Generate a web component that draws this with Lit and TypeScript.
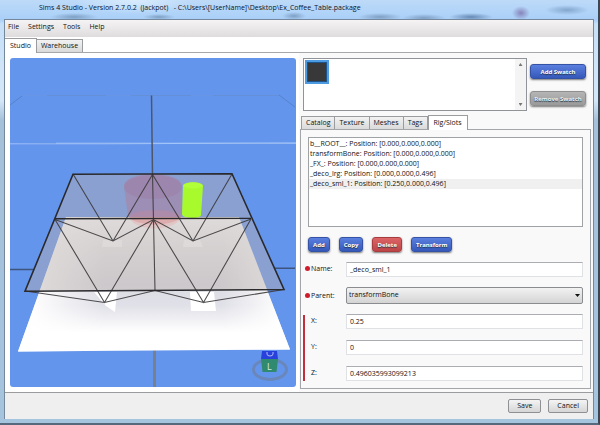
import { LitElement, html, css, svg } from "lit";
import { customElement, state } from "lit/decorators.js";

const BONES = [
  "b__ROOT__: Position: [0.000,0.000,0.000]",
  "transformBone: Position: [0.000,0.000,0.000]",
  "_FX_: Position: [0.000,0.000,0.000]",
  "_deco_lrg: Position: [0.000,0.000,0.496]",
  "_deco_sml_1: Position: [0.250,0.000,0.496]",
];

@customElement("model-viewport")
class ModelViewport extends LitElement {
  static styles = css`
    :host {
      display: block;
      min-height: 320px;
      margin-bottom: 2px;
      border-radius: 3px;
      overflow: hidden;
      background: #6495ed;
      position: relative;
    }
    .scene {
      position: absolute;
      inset: 0;
      width: 100%;
      height: 100%;
      display: block;
    }
    .frame {
      fill: none;
      stroke: #3c3a3c;
      stroke-opacity: 0.9;
      stroke-width: 1.1;
    }
    .edge {
      fill: none;
      stroke: #2a2a2c;
      stroke-width: 1.6;
    }
    .letter {
      font: 9px "Open Sans", sans-serif;
      fill: #d5efe2;
    }
  `;

  render() {
    return html`<svg class="scene" viewBox="10 58 286 329" preserveAspectRatio="xMidYMid slice" role="img" aria-label="Model preview">
      ${svg`
      <defs>
        <linearGradient id="floor" x1="0" y1="217" x2="0" y2="351" gradientUnits="userSpaceOnUse">
          <stop offset="0" stop-color="#fdfdfd"/>
          <stop offset=".22" stop-color="#ececee"/>
          <stop offset=".5" stop-color="#dcdce3"/>
          <stop offset=".66" stop-color="#e0e0e8"/>
          <stop offset=".86" stop-color="#fff"/>
        </linearGradient>
        <linearGradient id="fade" x1="0" y1="0" x2="1" y2="0">
          <stop offset=".06" stop-color="#fff" stop-opacity=".95"/>
          <stop offset=".32" stop-color="#fff" stop-opacity="0"/>
          <stop offset=".75" stop-color="#fff" stop-opacity="0"/>
          <stop offset=".95" stop-color="#fff" stop-opacity=".9"/>
        </linearGradient>
      </defs>
      <path d="M10 105 22 96M279 95l16 12" stroke="#5583c9" fill="none"/>
      <path d="M47 95.500H106M131 95.500h60M213 95.500h66" stroke="#5c86cb"/>
      <path d="M22 95.500H279" stroke="#6c95dd" stroke-width=".6"/>
      <path d="M10 143.800H102L296 143" stroke="#9dc0f8"/>
      <path d="M56 143.200H296" stroke="#a8c9fa" stroke-width=".8"/>
      <path d="M151.500 95.500 152.500 175" stroke="#4c566b" stroke-width="1.5"/>
      <path d="M10 269.500H34M274 268.200H295" stroke="#3d547e" stroke-width="1.4"/>
      <path d="M154.500 345V387" stroke="#76808f" stroke-width="3"/>
      <path d="M66 217H239L290 349.500 18 351.500Z" fill="url(#floor)"/>
      <path d="M66 217H239L290 349.500 18 351.500Z" fill="url(#fade)"/>
      <path d="M103 240h19v7h-20zM184 240h16l3 7h-20z" fill="#fff" opacity=".75"/>
      <path d="M94 292h23l-2 20-9-6zM190 292h24l2 19h-25z" fill="#fff"/>
      <path d="M73 174H232L284 289.500 25 291.500Z" fill="#b8b0ae" fill-opacity=".44"/>
      <path d="M124 186a29 12 0 0 1 58 0V216a28 12 0 0 1-54 0z" fill="#d0606c" fill-opacity=".28"/>
      <ellipse cx="153" cy="187" rx="29" ry="12" fill="#9a6a92" fill-opacity=".2"/>
      <path d="M129 216a25 12 0 0 0 52 0c-6-7-44-8-52 0z" fill="#f08084" fill-opacity=".2"/>
      <path d="M183 186c0-5 20-5 20 0l-2 29c0 4-19 4-19-1z" fill="#a8fa2c"/>
      <ellipse cx="193" cy="185.500" rx="9.500" ry="3" fill="#b1ff38"/>
      <path class="frame" d="M73 174 113 241 152.500 174.500 193 241 232 174M55 219.500 113 241 153.500 219.500 193 241 251 219M55 219.500 104.500 302.500 153.500 219.500 203.500 302.500 251 219M25 291 104.500 302.500 155 290.500 203.500 302.500 284 289.500M152.500 174 155 290.500"/>
      <path class="edge" d="M73 174.300 232 173.700 284 289.500 25 291.300ZM55 218.800 251 218.200"/>
      <ellipse cx="270" cy="369.500" rx="16.500" ry="10" fill="none" stroke="#6987bb" stroke-width="3"/>
      <path d="M262 351h15l1 8h-17z" fill="#2840dc"/>
      <path d="M261 359h17l-1.500 13h-14z" fill="#2f8a70"/>
      <path d="M267 352v2q0 2 3 2t3-2v-2" fill="none" stroke="#aebcf5"/>
      <text class="letter" x="267" y="370">L</text>
      `}
    </svg>`;
  }
}

@customElement("app-root")
class AppRoot extends LitElement {
  @state() private selected = 4;

  static styles = css`
    :host {
      display: block;
      font: 7px/12px "Open Sans", "Noto Sans", sans-serif;
      color: #111;
    }
    * {
      box-sizing: border-box;
    }
    button, input, select {
      font: inherit;
      color: inherit;
      margin: 0;
    }
    .window {
      min-height: 100vh;
      display: flex;
      flex-direction: column;
      padding: 0 4px 4px 4px;
      border-right: 2px solid #3c4754;
      border-bottom: 2px solid #56697c;
      background: linear-gradient(#bddaf8 0, #a9cff8 20px, #c6e0f8 24px, #d5e8f8 100px, #a5c1da 120px, #a5c4de 100%);
    }
    .title {
      height: 19px;
      padding: 2px 0 0 35px;
      white-space: pre;
      overflow: hidden;
      color: #0a121c;
      background:
        radial-gradient(ellipse 60px 14px at 130px 0, #d9ecfd, transparent),
        radial-gradient(ellipse 24px 4px at 70px 17px, #7f9fc4 0, transparent),
        radial-gradient(ellipse 16px 3px at 155px 17px, #7f9fc4, transparent),
        radial-gradient(ellipse 12px 4px at 290px 16px, #7f9fc4, transparent),
        radial-gradient(ellipse 22px 4px at 376px 17px, #7f9fc4, transparent),
        radial-gradient(ellipse 22px 4px at 420px 18px, #7f9fc4, transparent),
        radial-gradient(ellipse 22px 4px at 467px 17px, #6689b4, transparent),
        radial-gradient(ellipse 9px 7px at 517px 13px, #8684bb, transparent),
        radial-gradient(ellipse 22px 5px at 563px 10px, #83a6cd, transparent);
    }
    .client {
      flex: 1;
      display: flex;
      flex-direction: column;
      border: 1px solid #75879a;
      border-width: 1px 1px 0 1px;
      background: #fff;
    }
    .menu {
      display: flex;
      gap: 9px;
      height: 17px;
      padding: 0 3px;
      background: linear-gradient(#f5f3f3, #dedcdc);
    }
    .menu button {
      border: 0;
      padding: 0;
      background: none;
      line-height: 14px;
      height: 14px;
    }
    .tabs {
      display: flex;
      align-items: flex-end;
    }
    .tab {
      height: 13px;
      padding: 0 4px;
      line-height: 12px;
      border: 1px solid #9a9c9f;
      border-bottom: 0;
      background: linear-gradient(#f2f2f2, #dadada);
    }
    .tab + .tab {
      border-left-width: 0;
    }
    .tab.on {
      height: 15px;
      padding: 0 5px;
      margin-bottom: -1px;
      border-left-width: 1px;
      background: #fff;
      position: relative;
    }
    .main > .on {
      border-left: 0;
    }
    .main {
      padding-top: 1px;
    }
    .body {
      flex: 1;
      display: grid;
      grid-template-columns: 286fr 291fr;
      gap: 4px;
      padding: 5px 2px 3px 5px;
      border-top: 1px solid #a6a8aa;
      background: linear-gradient(90deg, #fff 50%, #f9f9f9 50%);
    }
    .side {
      display: flex;
      flex-direction: column;
      min-width: 0;
    }
    .swatches {
      display: flex;
      padding: 0 5px 3px 3px;
      gap: 3px;
    }
    .swatch-list {
      flex: 1;
      height: 53px;
      display: flex;
      justify-content: space-between;
      border: 1px solid #909398;
      background: #fff;
    }
    .swatch {
      width: 24px;
      height: 24px;
      margin: 1px;
      padding: 0;
      border: 2px solid #4c9be0;
      outline: 1px solid #1d5489;
      outline-offset: -3px;
      background: #383838;
    }
    .scroll {
      width: 11px;
      display: flex;
      flex-direction: column;
      justify-content: space-between;
      align-items: center;
      padding: 4px 0;
      background: #f4f4f4;
    }
    .arrow {
      width: 4px;
      height: 3px;
      background: #777;
      clip-path: polygon(50% 0, 100% 100%, 0 100%);
    }
    .arrow.down {
      clip-path: polygon(0 0, 100% 0, 50% 100%);
    }
    .swatch-actions {
      width: 56px;
      display: flex;
      flex-direction: column;
      gap: 12px;
      padding-top: 6px;
    }
    .pill {
      height: 15px;
      padding: 0 4px;
      border: 1px solid #3453a4;
      border-radius: 3px;
      background: linear-gradient(#5b7fde, #3558bb);
      color: #fff;
      font-size: 6px;
      font-weight: 700;
      line-height: 12px;
      white-space: nowrap;
      box-shadow: 0 1px 2px #777;
      text-shadow: 0 1px 1px #234;
    }
    .pill.red {
      border-color: #a83c40;
      background: linear-gradient(#dc6466, #bd4346);
    }
    .pill.off {
      padding: 0;
      border-color: #8f8f8f;
      background: linear-gradient(#b5b5b5, #9a9a9a);
      color: #eee;
    }
    .side .tabs {
      padding-left: 1px;
      height: 15px;
    }
    .panel {
      flex: 1;
      display: flex;
      flex-direction: column;
      padding: 7px;
      border: 1px solid #a4a7aa;
      background: #f9f9f9;
    }
    .bones {
      list-style: none;
      margin: 0;
      padding: 1px 0;
      height: 90px;
      border: 1px solid #a0a3a6;
      background: #fff;
      line-height: 10px;
    }
    .bones li {
      padding: 0 1px;
    }
    .bones .sel {
      background: #f0f0f0;
    }
    .actions {
      display: flex;
      gap: 9px;
      padding: 10px 0 9px;
    }
    .row {
      display: grid;
      grid-template-columns: 38px 1fr;
      align-items: center;
      height: 16px;
    }
    .row label {
      padding-left: 3px;
      position: relative;
    }
    .req::before {
      content: "";
      position: absolute;
      left: -3px;
      top: 3px;
      width: 5px;
      height: 5px;
      border-radius: 50%;
      background: #d01c2c;
    }
    .row input, .row select {
      width: 100%;
      min-width: 0;
      height: 15px;
      padding: 0 3px;
      border: 1px solid #dfe1e5;
      border-top-color: #abadb3;
      background: #fff;
    }
    .pick {
      position: relative;
      display: flex;
    }
    .pick::after {
      content: "";
      position: absolute;
      right: 3px;
      top: 7px;
      width: 5px;
      height: 3px;
      background: #111;
      clip-path: polygon(0 0, 100% 0, 50% 100%);
      pointer-events: none;
    }
    .row select {
      appearance: none;
      height: 17px;
      padding: 0 2px 1px;
      border: 1px solid #8a8c90;
      border-radius: 2px;
      background: linear-gradient(#f2f2f2, #d4d4d4);
    }
    .fields {
      display: flex;
      flex-direction: column;
      gap: 10px;
    }
    .axes {
      position: relative;
    }
    .axes::before {
      content: "";
      position: absolute;
      left: -5px;
      top: 2px;
      bottom: 0;
      width: 2px;
      background: #c0303c;
    }
    .footer {
      display: flex;
      justify-content: flex-end;
      gap: 7px;
      padding: 6px 5px;
      border-top: 1px solid #9a9c9e;
      background: #efefef;
    }
    .footer button {
      height: 14px;
      padding: 0 8px;
      line-height: 12px;
      border: 1px solid #8e9094;
      border-radius: 2px;
      background: linear-gradient(#f4f4f4, #d6d6d6);
    }
  `;

  render() {
    const tabs = ["Catalog", "Texture", "Meshes", "Tags", "Rig/Slots"];
    const axes = [["X", "0.25"], ["Y", "0"], ["Z", "0.496035993099213"]];
    return html`
      <div class="window">
        <header class="title">Sims 4 Studio - Version 2.7.0.2  (Jackpot)   - C:\\Users\\[UserName]\\Desktop\\Ex_Coffee_Table.package</header>
        <div class="client">
          <nav class="menu">
            ${["File", "Settings", "Tools", "Help"].map((m) => html`<button>${m}</button>`)}
          </nav>
          <div class="tabs main" role="tablist">
            <button class="tab on" role="tab" aria-selected="true">Studio</button>
            <button class="tab" role="tab">Warehouse</button>
          </div>
          <main class="body">
            <model-viewport></model-viewport>
            <section class="side">
              <div class="swatches">
                <div class="swatch-list">
                  <button class="swatch" aria-label="Black swatch"></button>
                  <div class="scroll"><span class="arrow"></span><span class="arrow down"></span></div>
                </div>
                <div class="swatch-actions">
                  <button class="pill">Add Swatch</button>
                  <button class="pill off">Remove Swatch</button>
                </div>
              </div>
              <div class="tabs" role="tablist">
                ${tabs.map((t, i) => html`<button class="tab ${i === 4 ? "on" : ""}" role="tab">${t}</button>`)}
              </div>
              <div class="panel">
                <ul class="bones">
                  ${BONES.map((b, i) => html`<li class=${i === this.selected ? "sel" : ""} @click=${() => (this.selected = i)}>${b}</li>`)}
                </ul>
                <div class="actions">
                  <button class="pill">Add</button>
                  <button class="pill">Copy</button>
                  <button class="pill red">Delete</button>
                  <button class="pill">Transform</button>
                </div>
                <div class="fields">
                  <div class="row"><label class="req" for="name">Name:</label><input id="name" .value=${"_deco_sml_1"} /></div>
                  <div class="row">
                    <label class="req" for="parent">Parent:</label>
                    <div class="pick"><select id="parent"><option>transformBone</option><option>b__ROOT__</option></select></div>
                  </div>
                  <div class="fields axes">
                    ${axes.map(([a, v]) => html`<div class="row"><label for=${a}>${a}:</label><input id=${a} .value=${v} /></div>`)}
                  </div>
                </div>
              </div>
            </section>
          </main>
          <footer class="footer"><button>Save</button><button>Cancel</button></footer>
        </div>
      </div>
    `;
  }
}
